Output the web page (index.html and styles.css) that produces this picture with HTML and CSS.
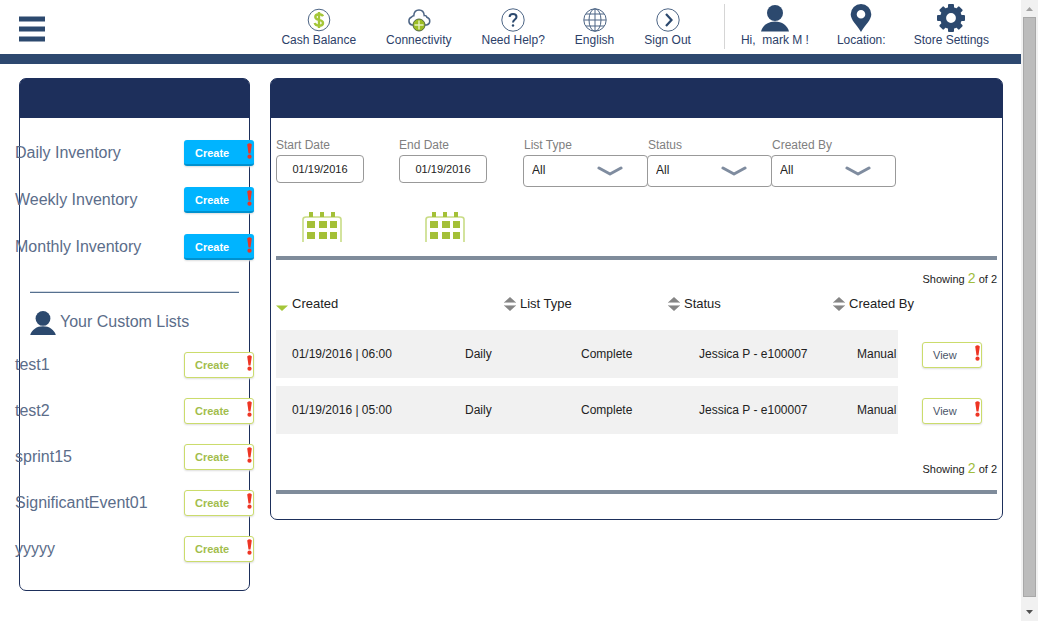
FILE: index.html
```html
<!DOCTYPE html>
<html lang="en">
<head>
<meta charset="utf-8">
<meta name="viewport" content="width=device-width, initial-scale=1">
<title>Inventory</title>
<link rel="stylesheet" href="styles.css">
</head>
<body>
<svg class="defs" width="0" height="0" aria-hidden="true">
  <symbol id="person" viewBox="0 0 28 27"><circle cx="14" cy="8" r="8"/><path d="M0 26.500C1.500 20.500 7 16.500 14 16.500S26.500 20.500 28 26.500Z"/></symbol>
  <symbol id="alert" viewBox="0 0 5 16"><path d="M.2 1.500Q2.500-.8 4.800 1.500L3.500 10.500H1.500Z"/><circle cx="2.500" cy="13.700" r="2.100"/></symbol>
  <symbol id="calendar" viewBox="0 0 40 31"><path d="M1 31V7.500Q1 5 4 5H36Q39 5 39 7.500V31" fill="none" stroke="#c9dc86" stroke-width="1.600"/><path d="M7 0h4v5H7zM18 0h4v5h-4zM29 0h4v5h-4zM5 9h8v7H5zM17 9h8v7h-8zM28 9h7v7h-7zM5 20h8v7H5zM17 20h8v7h-8zM28 20h7v7h-7z"/></symbol>
  <symbol id="chevron" viewBox="0 0 26 10"><path d="M2 2L13 8L24 2" fill="none" stroke="#7f8c9f" stroke-width="3" stroke-linecap="round" stroke-linejoin="round"/></symbol>
  <symbol id="sort" viewBox="0 0 12 14"><path d="M6 0L11.500 5H.5ZM.5 9H11.500L6 14Z" fill="#858585"/><path d="M0 5.500H12M0 8.500H12" stroke="#bbb"/></symbol>
</svg>

<div class="page">
  <header class="topbar">
    <button class="menu" type="button" aria-label="Menu"><svg width="26" height="26"><path d="M0 0.500h26v5H0zM0 10.500h26v5H0zM0 20.500h26v5H0z"/></svg></button>
    <nav class="nav">
      <div class="group">
        <a href="#"><svg width="24" height="24"><circle cx="12" cy="12" r="10.800" class="line"/><path d="M16 8.300C15.300 6.800 13.800 6.200 12 6.200C9.700 6.200 8.300 7.200 8.300 8.900C8.300 13 16 10.600 16 14.900C16 16.800 14.300 17.700 12 17.700C9.800 17.700 8.200 16.800 7.700 15M12 4V20" fill="none" stroke="#a4c639" stroke-width="2.400"/></svg>Cash Balance</a>
        <a href="#"><svg width="24" height="24"><path d="M6 17H5A4.200 4.200 0 0 1 4.700 9Q5.300 7.700 6.800 7.700C7 4.300 9 2 12 2C15 2 17 4.300 17.200 7.500C18.500 7.200 19.700 8 19.800 9.200A4 4 0 0 1 19.500 17H18" class="line bold"/><circle cx="12" cy="17" r="6" fill="#9cbd24" stroke="#52683f"/><path d="M12 12.500v9M7.500 17h9" stroke="#e7f0c1" stroke-width="1.400"/></svg>Connectivity</a>
        <a href="#"><svg width="24" height="24"><circle cx="12" cy="12" r="11.200" class="line"/><path d="M8.600 9C8.600 6.900 10 5.900 12 5.900S15.500 7 15.500 8.900C15.500 11.500 12 11.400 12 14.500" fill="none" stroke="#2c496e" stroke-width="2"/><circle cx="12" cy="17.500" r="1.200"/></svg>Need Help?</a>
        <a href="#"><svg width="24" height="24"><circle cx="12" cy="12" r="11.200" class="line"/><ellipse cx="12" cy="12" rx="6" ry="11.200" class="line"/><path d="M12 1v22M1 12h22M3 6h18M3 18h18" class="line"/></svg>English</a>
        <a href="#"><svg width="24" height="24"><circle cx="12" cy="12" r="11.200" class="line"/><path d="M10 6L15.500 12L10 18" fill="none" stroke="#2c496e" stroke-width="2.200"/></svg>Sign Out</a>
      </div>
      <div class="group account">
        <a href="#"><svg width="28" height="28"><use href="#person" y="1" width="28" height="27"/></svg><span>Hi,&nbsp; mark M !</span></a>
        <a href="#"><svg width="22" height="28"><path fill-rule="evenodd" d="M11 0A10.300 10.300 0 0 0 .7 10.300C.7 16 6.500 20.500 11 28C15.500 20.500 21.300 16 21.300 10.300A10.300 10.300 0 0 0 11 0ZM11 6a4.300 4.300 0 1 1 0 8.600a4.300 4.300 0 1 1 0-8.600Z"/></svg>Location:</a>
        <a href="#"><svg width="28" height="28" viewBox="-14 -14 28 28"><circle r="7.900" fill="none" stroke="#2c496e" stroke-width="6"/><path id="tooth" d="M-3-9.500V-13Q-3-14-2-14H2Q3-14 3-13V-9.500Z"/><use href="#tooth" transform="rotate(45)"/><use href="#tooth" transform="rotate(90)"/><use href="#tooth" transform="rotate(135)"/><use href="#tooth" transform="rotate(180)"/><use href="#tooth" transform="rotate(225)"/><use href="#tooth" transform="rotate(270)"/><use href="#tooth" transform="rotate(315)"/></svg>Store Settings</a>
      </div>
    </nav>
  </header>

  <main class="content">
    <aside class="panel side">
      <div class="panel-head"></div>
      <ul class="lists">
        <li>Daily Inventory<button class="btn solid" type="button">Create<svg><use href="#alert"/></svg></button></li>
        <li>Weekly Inventory<button class="btn solid" type="button">Create<svg><use href="#alert"/></svg></button></li>
        <li>Monthly Inventory<button class="btn solid" type="button">Create<svg><use href="#alert"/></svg></button></li>
      </ul>
      <hr class="thin">
      <h2 class="custom"><svg width="26" height="24"><use href="#person" width="26" height="25"/></svg><span>Your Custom Lists</span></h2>
      <ul class="lists saved">
        <li>test1<button class="btn" type="button">Create<svg><use href="#alert"/></svg></button></li>
        <li>test2<button class="btn" type="button">Create<svg><use href="#alert"/></svg></button></li>
        <li>sprint15<button class="btn" type="button">Create<svg><use href="#alert"/></svg></button></li>
        <li>SignificantEvent01<button class="btn" type="button">Create<svg><use href="#alert"/></svg></button></li>
        <li>yyyyy<button class="btn" type="button">Create<svg><use href="#alert"/></svg></button></li>
      </ul>
    </aside>

    <section class="panel results">
      <div class="panel-head"></div>
      <div class="results-body">
        <form class="filters">
          <div class="date"><label for="start">Start Date</label><input id="start" type="text" value="01/19/2016"><button type="button" aria-label="Pick start date"><svg width="40" height="30"><use href="#calendar" width="40" height="31"/></svg></button></div>
          <div class="date"><label for="end">End Date</label><input id="end" type="text" value="01/19/2016"><button type="button" aria-label="Pick end date"><svg width="40" height="30"><use href="#calendar" width="40" height="31"/></svg></button></div>
          <div class="choices">
            <div class="choice"><label for="type">List Type</label><div class="select"><select id="type"><option>All</option></select><svg><use href="#chevron"/></svg></div></div>
            <div class="choice"><label for="status">Status</label><div class="select"><select id="status"><option>All</option></select><svg><use href="#chevron"/></svg></div></div>
            <div class="choice"><label for="by">Created By</label><div class="select"><select id="by"><option>All</option></select><svg><use href="#chevron"/></svg></div></div>
          </div>
        </form>
        <hr class="thick">
        <p class="count">Showing <b>2</b> of 2</p>
        <table>
          <thead>
            <tr>
              <th><button type="button"><svg width="12" height="14"><path d="M0 8.500H12L6 14Z" fill="#a4c639"/></svg>Created</button></th>
              <th><button type="button"><svg width="12" height="14"><use href="#sort"/></svg>List Type</button></th>
              <th><button type="button"><svg width="12" height="14"><use href="#sort"/></svg>Status</button></th>
              <th><button type="button"><svg width="12" height="14"><use href="#sort"/></svg>Created By</button></th>
            </tr>
          </thead>
          <tbody>
            <tr><td>01/19/2016 | 06:00</td><td>Daily</td><td>Complete</td><td>Jessica P - e100007</td><td>Manual</td><td><button class="btn view" type="button">View<svg><use href="#alert"/></svg></button></td></tr>
            <tr><td>01/19/2016 | 05:00</td><td>Daily</td><td>Complete</td><td>Jessica P - e100007</td><td>Manual</td><td><button class="btn view" type="button">View<svg><use href="#alert"/></svg></button></td></tr>
          </tbody>
        </table>
        <p class="count foot">Showing <b>2</b> of 2</p>
        <hr class="thick">
      </div>
    </section>
  </main>
</div>

<div class="scrollbar" aria-hidden="true">
  <svg width="7" height="4"><path d="M0 4L3.500 0L7 4Z" fill="#a3a3a3"/></svg>
  <div class="thumb"></div>
  <svg width="7" height="4"><path d="M0 0H7L3.500 4Z" fill="#505050"/></svg>
</div>
</body>
</html>
```

FILE: styles.css
```css
* { box-sizing: border-box; }

body {
  display: flex;
  min-height: 100vh;
  margin: 0;
  background: #fff;
  color: #222;
  font: 12px/14px "Liberation Sans", Arial, sans-serif;
}

button, input, select { margin: 0; font: inherit; color: inherit; }
button { padding: 0; border: 0; background: none; cursor: pointer; }
svg { display: block; flex: none; fill: #2c496e; }
.defs { position: absolute; }
ul, p, h2 { margin: 0; padding: 0; list-style: none; }
hr { margin: 0; border: 0; }

.page { flex: 1; min-width: 0; }

/* Top bar */
.topbar {
  display: flex;
  justify-content: space-between;
  height: 64px;
  padding: 4px 32px 0 19px;
  border-bottom: 10px solid #2d486f;
}
.menu { align-self: flex-start; padding-top: 12px; }
.nav { display: flex; gap: 33px; }
.group { display: flex; gap: 30px; }
.group.account { gap: 28px; height: 45px; padding-left: 16px; border-left: 1px solid #d5d5d5; }
.nav a {
  display: flex;
  flex-direction: column;
  align-items: center;
  justify-content: flex-end;
  height: 43px;
  gap: 1px;
  color: #2c4068;
  text-decoration: none;
  white-space: nowrap;
}
.line { fill: none; stroke: #4d6585; stroke-width: 1; }
.line.bold { stroke-width: 1.500; }

/* Panels */
.content {
  display: flex;
  align-items: flex-start;
  gap: 20px;
  padding: 14px 18px 30px 19px;
}
.panel { border: 1px solid #1d2f5b; border-radius: 7px; }
.panel-head { height: 39px; background: #1d2f5b; border-radius: 5px 5px 0 0; }
.side { flex: none; width: 231px; padding-bottom: 28px; }
.results { flex: 1; min-width: 0; }
.results-body { padding: 20px 5px 25px; }

/* Inventory lists */
.lists {
  display: flex;
  flex-direction: column;
  gap: 21px;
  margin: 22px -5px 0;
  color: #5b6d8a;
  font-size: 16px;
}
.lists li { display: flex; align-items: center; justify-content: space-between; height: 26px; }
.saved { gap: 20px; margin-top: 17px; }
.thin { height: 2px; margin: 31px 10px 18px; border-top: 1px solid #d3dae3; background: #56708f; }
.custom {
  display: flex;
  align-items: center;
  gap: 4px;
  height: 24px;
  margin-left: 10px;
  color: #5b6d8a;
  font-size: 16px;
  font-weight: 400;
}
.custom span { padding-bottom: 2px; }

/* Buttons with an alert mark */
.btn {
  display: flex;
  align-items: center;
  justify-content: space-between;
  width: 70px;
  height: 26px;
  padding: 0 1px 0 10px;
  border: 1px solid #cbdc6c;
  border-radius: 3px;
  box-shadow: 0 1px 2px #ddd;
  background: #fff;
  color: #a2bd4c;
  font-size: 11px;
  font-weight: 700;
}
.btn svg { width: 5px; height: 16px; margin-bottom: 4px; fill: #ee3524; }
.btn.solid { border: 0; border-bottom: 2px solid #0091cf; padding: 2px 2px 0 11px; background: #00b4ff; color: #fff; }
.btn.view { width: 60px; color: #4a5568; font-weight: 400; }

/* Filters */
.filters { display: flex; align-items: flex-start; color: #808080; }
.date { display: flex; flex-direction: column; width: 123px; gap: 3px; }
.date input {
  width: 88px;
  height: 28px;
  border: 1px solid #999;
  border-radius: 4px;
  color: #222;
  font-size: 11px;
  text-align: center;
}
.date button { align-self: flex-start; margin: 26px 0 0 26px; }
.date svg { fill: #a4c037; }
.choices { display: flex; margin-left: 1px; }
.choice { display: flex; flex-direction: column; gap: 3px; width: 125px; margin-right: -1px; }
.choice label { padding-left: 1px; }
.select { position: relative; }
.select select {
  width: 100%;
  height: 32px;
  padding: 0 8px 2px;
  border: 1px solid #999;
  border-radius: 4px;
  appearance: none;
  background: #fff;
  color: #222;
}
.select svg { position: absolute; top: 11px; right: 25px; width: 26px; height: 10px; pointer-events: none; }

/* Results */
.thick { height: 4px; background: #7f8c9b; }
.filters + .thick { margin-top: 14px; }
.count { height: 18px; margin: 9px 0 8px; font-size: 11px; line-height: 18px; text-align: right; }
.count b { color: #a0bd3c; font-size: 14px; font-weight: 400; }
.count.foot { margin: 25px 0 13px; }

table, thead, tbody { display: block; }
tr { display: grid; }
thead tr { grid-template-columns: 228fr 164fr 165fr 164fr; height: 18px; margin-bottom: 17px; }
tbody tr { grid-template-columns: 189fr 116fr 118fr 158fr 41fr 99fr; height: 48px; }
tbody tr + tr { margin-top: 8px; }
th, td { display: flex; align-items: center; padding: 0; white-space: nowrap; }
th { font-size: 13px; font-weight: 400; }
th button { display: flex; align-items: center; gap: 4px; }
td { background: #f1f1f1; }
td:first-child { padding-left: 16px; }
td:last-child { padding: 2px 0 0 24px; background: none; }

/* Scrollbar */
.scrollbar {
  display: flex;
  flex-direction: column;
  align-items: center;
  gap: 6px;
  width: 17px;
  padding: 7px 0 7px;
  background: #f1f1f1;
}
.thumb { flex: 1; width: 13px; margin-bottom: 7px; border: 1px solid #a8a8a8; background: #bcbcbc; }
```
